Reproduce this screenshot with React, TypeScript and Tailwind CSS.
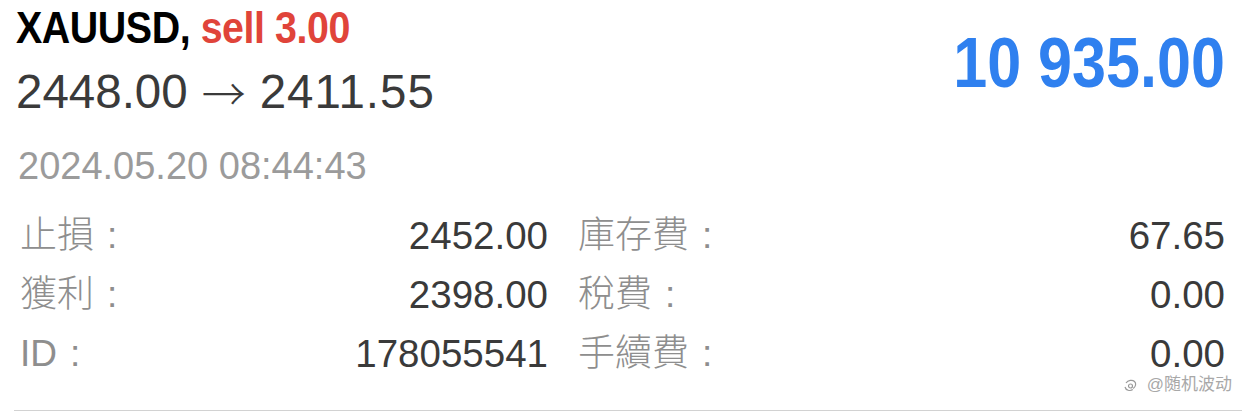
import React from 'react'

const rows = [
  { l1: '止損', v1: '2452.00', l2: '庫存費', v2: '67.65' },
  { l1: '獲利', v1: '2398.00', l2: '稅費', v2: '0.00' },
  { l1: 'ID', v1: '178055541', l2: '手續費', v2: '0.00' },
]

const Label = ({ text }: { text: string }) => (
  <span className="flex items-center text-[37px] font-light text-[#8e8e8e]">
    {text}
    <span className="ml-[13px] font-['Liberation_Sans',sans-serif]">:</span>
  </span>
)

const App = () => {
  return (
    <div className="relative w-[1242px] h-[420px] overflow-hidden bg-white font-['Liberation_Sans','Noto_Sans_CJK_TC',sans-serif]">
      <div className="flex items-center justify-between pl-4 pr-[17px] pt-[6px]">
        <div className="flex flex-col">
          <div className="origin-left scale-x-[0.875] whitespace-nowrap text-[45px] leading-[44px] font-bold tracking-[-0.5px]">
            <span className="text-black">XAUUSD, </span>
            <span className="text-[#e0443a]">sell 3.00</span>
          </div>
          <div className="mt-[14px] flex items-center whitespace-nowrap text-[47.5px] leading-[56px] text-[#3a3a3a]">
            <span>2448.00</span>
            <span className="mx-[14px] font-['Noto_Sans_CJK_TC',sans-serif] text-[44px] font-light">→</span>
            <span className="tracking-[1px]">2411.55</span>
          </div>
        </div>
        <div className="text-[71px] leading-[80px] font-bold text-[#2f80ef] scale-x-[0.86] origin-right">
          10 935.00
        </div>
      </div>

      <div className="mt-[26px] pl-[18px] text-[38px] leading-[40px] text-[#9b9b9b]">
        2024.05.20 08:44:43
      </div>

      <div className="mt-[20px] grid grid-cols-[532px_1fr] gap-x-[30px] pl-4 pr-[17px]">
        {rows.map((r) => (
          <React.Fragment key={r.l1}>
            <div className="flex h-[59px] items-center justify-between">
              <span className="pl-1">
                <Label text={r.l1} />
              </span>
              <span className="text-[38.5px] text-[#3a3a3a]">{r.v1}</span>
            </div>
            <div className="flex h-[59px] items-center justify-between">
              <Label text={r.l2} />
              <span className="text-[38.5px] text-[#3a3a3a]">{r.v2}</span>
            </div>
          </React.Fragment>
        ))}
      </div>

      <div className="absolute right-[10px] top-[372px] flex items-center gap-[7px] text-[17px] text-[#a8a8a8]">
        <svg width="18" height="18" viewBox="0 0 18 18" fill="none" stroke="#9a9a9a" strokeWidth="1.2">
          <path d="M4 7c2-3 6.5-3.5 8.5-1.5s1.3 5-1.3 7" />
          <path d="M3 11c.7 3.2 5 4.5 7.8 2.6" />
          <circle cx="8.5" cy="10" r="2" />
        </svg>
        <span>@随机波动</span>
      </div>

      <div className="absolute left-[14px] right-0 top-[410px] h-px bg-[#d2d2d2]" />
    </div>
  )
}

export default App
